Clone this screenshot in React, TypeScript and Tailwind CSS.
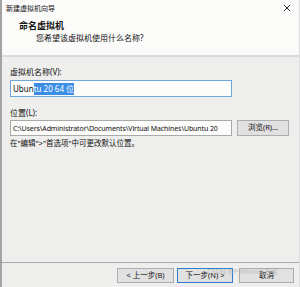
import React from 'react';

const cjk = { fontFamily: '"Noto Sans", "Noto Sans CJK SC", sans-serif' };

export default function App() {
  return (
    <div
      className="relative w-[300px] h-[287px] flex flex-col bg-[#eeeeec] border-l-2 border-l-[#a3a3a3] border-r border-r-[#dcdcdc] text-[#111] overflow-hidden"
      style={cjk}
    >
      {/* header */}
      <div className="h-[57px] shrink-0 bg-[#fbfbfa] border-b-2 border-b-[#dadada] flex flex-col">
        <div className="flex items-center justify-between pl-[4px] pr-[8px] h-[16px]">
          <span className="text-[7px] leading-none">新建虚拟机向导</span>
          <svg width="8" height="8" viewBox="0 0 8 8" className="text-[#333]">
            <path d="M1 1 L7 7 M7 1 L1 7" stroke="currentColor" strokeWidth="1" />
          </svg>
        </div>
        <div className="pl-[17px] mt-[5px] text-[9px] font-bold leading-none">命名虚拟机</div>
        <div className="pl-[34px] mt-[4px] text-[8px] leading-none">您希望该虚拟机使用什么名称?</div>
      </div>

      {/* body */}
      <div className="flex flex-col px-[8px] flex-1">
        <div className="mt-[11px] text-[8px] leading-none">虚拟机名称(V):</div>
        <div className="mt-[4px] w-[222px] h-[17px] bg-[#fcfcfb] border border-[#6fa6dc] flex items-center px-[2px] text-[8px] leading-none">
          <span>Ubun</span>
          <span className="bg-[#3a8ee6] text-white h-[12px] flex items-center">tu 20 64 位</span>
        </div>

        <div className="mt-[12px] text-[8px] leading-none">位置(L):</div>
        <div className="mt-[3px] flex items-center gap-[5px]">
          <div className="w-[222px] h-[16px] bg-[#fcfcfb] border border-[#a9a9a9] flex items-center px-[2px] text-[7px] tracking-[-0.1px] leading-none whitespace-nowrap overflow-hidden">
            C:\Users\Administrator\Documents\Virtual Machines\Ubuntu 20
          </div>
          <button className="w-[52px] h-[16px] bg-[#e1e1e1] border border-[#adadad] text-[7.5px] leading-none">
            浏览(R)...
          </button>
        </div>
        <div className="mt-[4px] text-[7.5px] leading-none">在"编辑"&gt;"首选项"中可更改默认位置。</div>
      </div>

      {/* footer */}
      <div className="h-[25px] shrink-0 border-t border-t-[#a8a8a8] flex items-start pt-[5px] pr-[5px]">
        <div className="flex-1" />
        <button className="w-[57px] h-[15px] bg-[#e1e1e1] border border-[#adadad] text-[7.5px] leading-none">
          &lt; 上一步(B)
        </button>
        <button className="ml-[3px] w-[56px] h-[15px] bg-[#e1e1e1] border border-[#2f7bd2] text-[7.5px] leading-none">
          下一步(N) &gt;
        </button>
        <button className="ml-[6px] w-[55px] h-[15px] bg-[#e1e1e1] border border-[#adadad] text-[7.5px] leading-none">
          取消
        </button>
      </div>

      <div className="absolute left-[205px] top-[268px] text-[7px] leading-none text-[#a5a5a5] opacity-60 pointer-events-none">
        CSDN @Python小白菜
      </div>
    </div>
  );
}
